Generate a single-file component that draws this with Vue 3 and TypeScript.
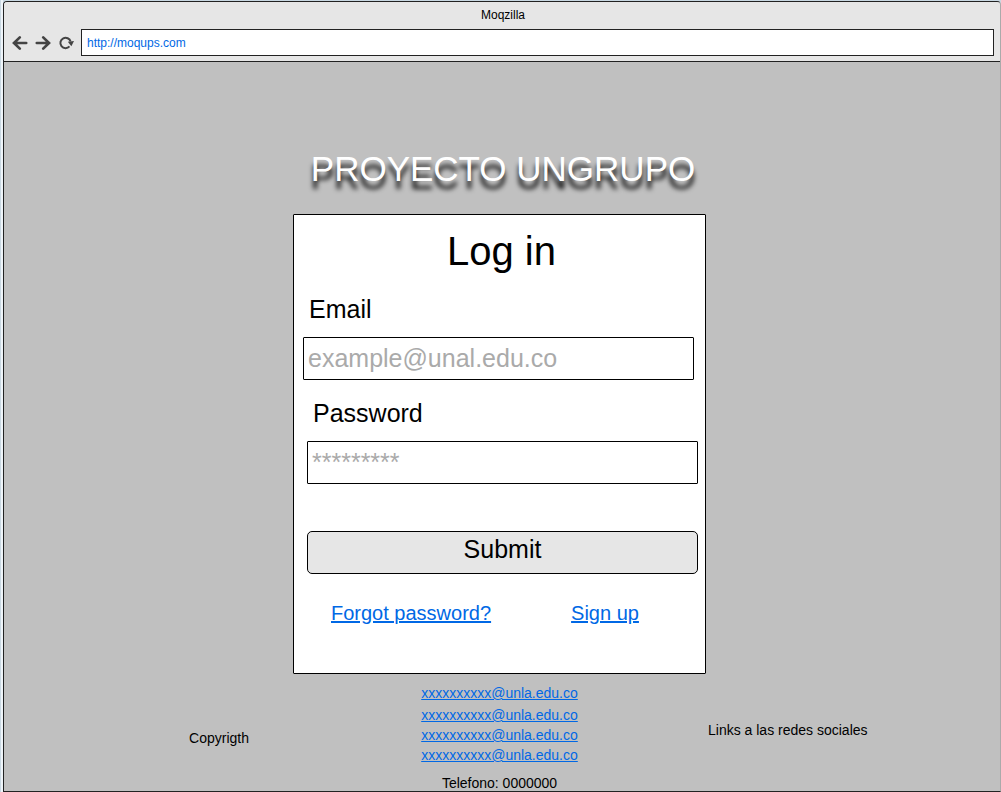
<script setup lang="ts">
import { ref } from 'vue'

const address = ref('http://moqups.com')
const email = ref('')
const password = ref('')
const contacts: string[] = [
  'xxxxxxxxxx@unla.edu.co',
  'xxxxxxxxxx@unla.edu.co',
  'xxxxxxxxxx@unla.edu.co',
  'xxxxxxxxxx@unla.edu.co',
]
</script>

<template>
  <div class="browser">
    <header class="chrome">
      <div class="window-title">Moqzilla</div>
      <div class="toolbar">
        <button type="button" class="tool" aria-label="Back">
          <svg viewBox="0 0 16 16" width="16" height="16">
            <path d="M7.8 2.4 L2 8 L7.8 13.6 M2.4 8 H14.2" fill="none" stroke="#444" stroke-width="2.7" stroke-linecap="round" />
          </svg>
        </button>
        <button type="button" class="tool" aria-label="Forward">
          <svg viewBox="0 0 16 16" width="16" height="16">
            <path d="M8.2 2.4 L14 8 L8.2 13.6 M13.6 8 H1.8" fill="none" stroke="#444" stroke-width="2.7" stroke-linecap="round" />
          </svg>
        </button>
        <button type="button" class="tool" aria-label="Reload">
          <svg viewBox="0 0 16 16" width="16" height="16">
            <path d="M11.5 11.4 A5.2 5.2 0 1 1 12.6 6.6" fill="none" stroke="#444" stroke-width="2" />
            <path d="M9.8 6.8 L16 6 L13.4 11.2 Z" fill="#444" />
          </svg>
        </button>
        <input v-model="address" class="address" type="text" aria-label="Address" />
      </div>
    </header>

    <main class="page">
      <h1 class="brand">PROYECTO UNGRUPO</h1>

      <div class="content">
        <form class="card" @submit.prevent>
          <h2 class="heading">Log in</h2>
          <div class="field field-email">
            <label for="email">Email</label>
            <input id="email" v-model="email" type="text" placeholder="example@unal.edu.co" />
          </div>
          <div class="field field-password">
            <label for="password">Password</label>
            <input id="password" v-model="password" type="password" placeholder="*********" />
          </div>
          <button type="submit" class="submit">Submit</button>
          <nav class="options">
            <a href="#forgot">Forgot password?</a>
            <a href="#signup">Sign up</a>
          </nav>
        </form>

        <footer class="footer">
          <p class="copyright">Copyrigth</p>
          <div class="contact">
            <ul>
              <li v-for="(contact, i) in contacts" :key="i">
                <a :href="`mailto:${contact}`">{{ contact }}</a>
              </li>
            </ul>
            <p class="phone">Telefono: 0000000</p>
          </div>
          <p class="social">Links a las redes sociales</p>
        </footer>
      </div>
    </main>
  </div>
</template>

<style>
body {
  margin: 0;
  background: linear-gradient(to right, #c9d8e2 1px, #eef4f9 1px, #eef4f9 3px, #c9d8e2 3px);
}
</style>

<style scoped>
.browser {
  box-sizing: border-box;
  min-height: calc(100vh - 1px);
  margin: 1px 0 0 3px;
  display: flex;
  flex-direction: column;
  overflow: hidden;
  border: 1px solid #222;
  border-right-color: #aaa;
  border-radius: 4px 4px 0 0;
  background: #c0c0c0;
  color: #000;
  font-family: "Liberation Sans", Arial, sans-serif;
}

input,
button {
  box-sizing: border-box;
  margin: 0;
  font-family: inherit;
  color: inherit;
}

a {
  color: #0068e5;
}

.chrome {
  padding: 5px 6px 5px 8px;
  border-bottom: 1px solid #222;
  background: #e6e6e6;
}

.window-title {
  margin-bottom: 6px;
  font-size: 12px;
  line-height: 16px;
  text-align: center;
}

.toolbar {
  display: flex;
  align-items: center;
  gap: 7px;
}

.tool {
  display: flex;
  padding: 0;
  border: 0;
  background: none;
}

.address {
  flex: 1;
  min-width: 0;
  height: 27px;
  padding: 0 5px;
  border: 1px solid #222;
  border-radius: 0;
  background: #fff;
  color: #0068e5;
  font-size: 12px;
}

.page {
  flex: 1;
  padding-top: 87px;
}

.brand {
  margin: 0 0 25px;
  padding-left: 2px;
  color: #fff;
  font-size: 35px;
  font-weight: 400;
  line-height: 40px;
  text-align: center;
  text-shadow: 0 8px 5px #000;
}

.content {
  padding-right: 5px;
}

.card {
  box-sizing: border-box;
  display: flex;
  flex-direction: column;
  width: 413px;
  max-width: 100%;
  margin: 0 auto;
  padding: 12px 7px 48px 13px;
  border: 1px solid #000;
  border-radius: 1px;
  background: #fff;
}

.heading {
  margin: 0 0 20px;
  padding-right: 2px;
  font-size: 40px;
  font-weight: 400;
  line-height: 48px;
  text-align: center;
}

.field {
  display: flex;
  flex-direction: column;
  gap: 14px;
  font-size: 25px;
}

.field-email {
  margin: 0 4px 19px -4px;
}

.field-password {
  margin-bottom: 47px;
}

.field label {
  padding-left: 6px;
  line-height: 28px;
}

.field input {
  width: 100%;
  height: 43px;
  padding: 0 4px;
  border: 1px solid #000;
  border-radius: 1px;
  background: #fff;
  font-size: 25px;
}

.field input::placeholder {
  color: #aaa;
  opacity: 1;
}

.submit {
  height: 43px;
  padding: 0 0 6px;
  border: 1px solid #000;
  border-radius: 5px;
  background: #e6e6e6;
  font-size: 25px;
}

.options {
  display: flex;
  gap: 80px;
  margin-top: 27px;
  padding-left: 24px;
  font-size: 20px;
  line-height: 24px;
}

.footer {
  display: grid;
  grid-template-columns: minmax(0, 1fr) 413px minmax(0, 1fr);
  padding-top: 9px;
  font-size: 14px;
  line-height: 20px;
}

.footer p,
.footer ul {
  margin: 0;
  padding: 0;
  list-style: none;
}

.footer .copyright {
  padding: 45px 44px 0 0;
  text-align: right;
}

.contact {
  text-align: center;
}

.contact li:first-child {
  margin-bottom: 2px;
}

.footer .phone {
  margin-top: 10px;
  line-height: 16px;
}

.footer .social {
  padding: 37px 0 0 2px;
}
</style>
